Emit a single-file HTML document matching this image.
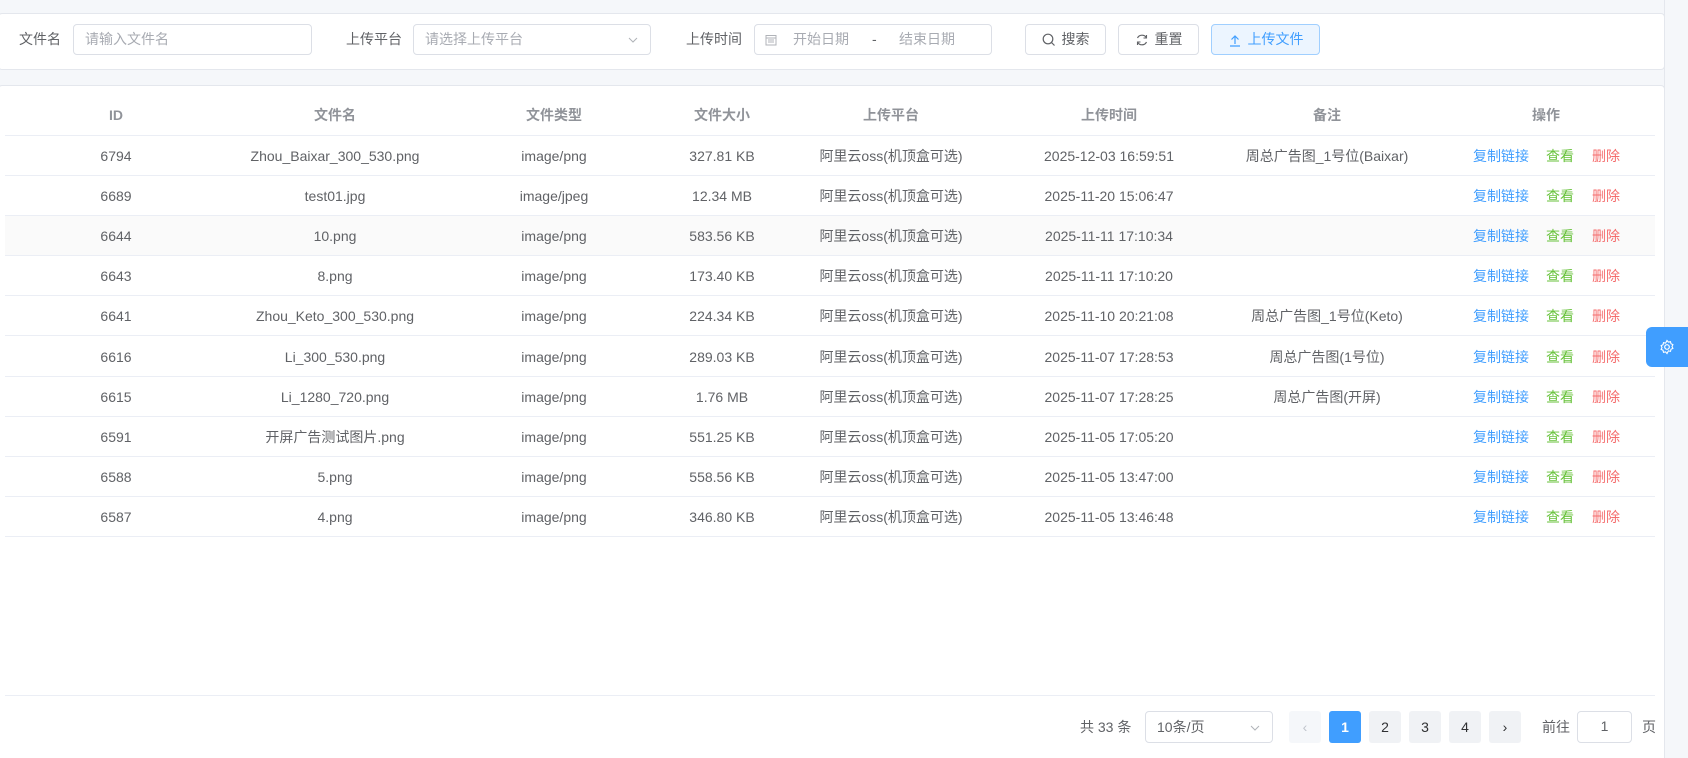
<!DOCTYPE html>
<html><head><meta charset="utf-8"><style>
*{box-sizing:border-box;margin:0;padding:0}
html{width:1688px;height:758px;overflow:hidden}
body{width:1688px;height:758px;background:#f5f7fa;font-family:"Liberation Sans","Noto Sans CJK SC",sans-serif;font-size:14px;color:#606266;position:relative;overflow:hidden}
.abs{position:absolute}
.card{position:absolute;left:-2px;background:#fff;border:1px solid #e4e7ed;border-radius:4px}
.lbl{position:absolute;top:24px;height:31px;line-height:31px;color:#606266;font-size:14px}
.inp{position:absolute;top:24px;height:31px;border:1px solid #dcdfe6;border-radius:4px;color:#a8abb2;line-height:29px;padding-left:11px;font-size:14px}
.btn{position:absolute;top:24px;height:31px;border:1px solid #dcdfe6;border-radius:4px;color:#606266;line-height:29px;font-size:14px;display:flex;align-items:center;justify-content:center;gap:6px}
.row{position:absolute;left:5px;width:1650px;height:40px;border-bottom:1px solid #ebeef5}
.c{position:absolute;top:0;height:40px;line-height:40px;text-align:center;white-space:nowrap;transform:translateX(-50%)}
.h .c{color:#909399;font-weight:bold;line-height:56px;height:48px}
.pg{position:absolute;top:711px;width:32px;height:32px;border-radius:3px;background:#f0f2f5;text-align:center;line-height:32px;color:#303133;font-size:14px}
</style></head><body>
<div class="card" style="top:13px;width:1667px;height:57px"></div>
<div class="lbl" style="left:19px">文件名</div>
<div class="inp" style="left:73px;width:239px">请输入文件名</div>
<div class="lbl" style="left:346px">上传平台</div>
<div class="inp" style="left:413px;width:238px">请选择上传平台<svg class="abs" style="right:12px;top:11px" width="10" height="8" viewBox="0 0 10 8"><path d="M1 2l4 4 4-4" fill="none" stroke="#b0b3b8" stroke-width="1"/></svg></div>
<div class="lbl" style="left:686px">上传时间</div>
<div class="inp" style="left:754px;width:238px;padding-left:0">
<svg class="abs" style="left:10px;top:9px" width="12" height="12" viewBox="0 0 12 12"><rect x="1" y="1.5" width="10" height="9.5" fill="none" stroke="#b0b3b8"/><path d="M1 4h10M3 6h6M3 8h6" stroke="#b0b3b8"/></svg>
<span class="abs" style="left:38px">开始日期</span><span class="abs" style="left:117px;color:#606266">-</span><span class="abs" style="left:144px">结束日期</span></div>
<div class="btn" style="left:1025px;width:81px"><svg width="14" height="14" viewBox="0 0 14 14"><circle cx="6" cy="6" r="4.8" fill="none" stroke="#606266" stroke-width="1.2"/><path d="M9.5 9.5l3 3" stroke="#606266" stroke-width="1.2"/></svg><span>搜索</span></div>
<div class="btn" style="left:1118px;width:81px"><svg width="14" height="14" viewBox="0 0 14 14"><path d="M11.5 5A5 5 0 0 0 2.5 5M2.5 9a5 5 0 0 0 9 0" fill="none" stroke="#606266" stroke-width="1.2"/><path d="M11.5 2v3h-3M2.5 12V9h3" fill="none" stroke="#606266" stroke-width="1.1"/></svg><span>重置</span></div>
<div class="btn" style="left:1211px;width:109px;background:#ecf5ff;border-color:#a0cfff;color:#409eff"><svg width="14" height="14" viewBox="0 0 14 14"><path d="M7 11V3M3.5 6.5L7 3l3.5 3.5M2 13h10" fill="none" stroke="#409eff" stroke-width="1.2"/></svg><span>上传文件</span></div>

<div class="card" style="top:85px;width:1667px;height:673px;border-bottom:none;border-radius:4px 4px 0 0"></div>
<div class="row h" style="top:87px;height:49px">
<div class="c" style="left:111px">ID</div><div class="c" style="left:330px">文件名</div><div class="c" style="left:549px">文件类型</div><div class="c" style="left:717px">文件大小</div><div class="c" style="left:886px">上传平台</div><div class="c" style="left:1104px">上传时间</div><div class="c" style="left:1322px">备注</div><div class="c" style="left:1541px">操作</div></div>
<div id="rows"></div>
<div class="abs" style="left:5px;top:695px;width:1650px;border-top:1px solid #ebeef5"></div>
<div class="abs" style="left:1080px;top:711px;line-height:32px">共 33 条</div>
<div class="inp" style="left:1145px;top:711px;width:128px;height:32px;line-height:30px;color:#606266">10条/页<svg class="abs" style="right:12px;top:12px" width="10" height="8" viewBox="0 0 10 8"><path d="M1 2l4 4 4-4" fill="none" stroke="#b0b3b8"/></svg></div>
<div class="pg" style="left:1289px;color:#c0c4cc;background:#f5f7fa">‹</div>
<div class="pg" style="left:1329px;background:#409eff;color:#fff;font-weight:bold">1</div>
<div class="pg" style="left:1369px">2</div><div class="pg" style="left:1409px">3</div><div class="pg" style="left:1449px">4</div>
<div class="pg" style="left:1489px">›</div>
<div class="abs" style="left:1542px;top:711px;line-height:32px">前往</div>
<div class="inp" style="left:1577px;top:711px;width:55px;height:32px;padding:0;text-align:center;color:#606266">1</div>
<div class="abs" style="left:1642px;top:711px;line-height:32px">页</div>
<div class="abs" style="left:1664px;top:0;width:24px;height:758px;background:#f5f7fa;border-left:1px solid #e4e7ed"></div>
<div class="abs" style="left:1646px;top:327px;width:42px;height:40px;background:#409eff;border-radius:6px 0 0 6px"><svg class="abs" style="left:13px;top:12px" width="16" height="16" viewBox="0 0 16 16"><circle cx="8" cy="8" r="2.3" fill="none" stroke="#fff" stroke-width="1.2"/><path d="M8 1.5l1.4 1.6 2.1-.5.5 2.1 1.9.9-.9 1.9.9 1.9-1.9.9-.5 2.1-2.1-.5L8 14.5l-1.4-1.6-2.1.5-.5-2.1-1.9-.9.9-1.9-.9-1.9 1.9-.9.5-2.1 2.1.5z" fill="none" stroke="#fff" stroke-width="1.1"/></svg></div>
<script>
const d=[["6794","Zhou_Baixar_300_530.png","image/png","327.81 KB","2025-12-03 16:59:51","周总广告图_1号位(Baixar)"],
["6689","test01.jpg","image/jpeg","12.34 MB","2025-11-20 15:06:47",""],
["6644","10.png","image/png","583.56 KB","2025-11-11 17:10:34",""],
["6643","8.png","image/png","173.40 KB","2025-11-11 17:10:20",""],
["6641","Zhou_Keto_300_530.png","image/png","224.34 KB","2025-11-10 20:21:08","周总广告图_1号位(Keto)"],
["6616","Li_300_530.png","image/png","289.03 KB","2025-11-07 17:28:53","周总广告图(1号位)"],
["6615","Li_1280_720.png","image/png","1.76 MB","2025-11-07 17:28:25","周总广告图(开屏)"],
["6591","开屏广告测试图片.png","image/png","551.25 KB","2025-11-05 17:05:20",""],
["6588","5.png","image/png","558.56 KB","2025-11-05 13:47:00",""],
["6587","4.png","image/png","346.80 KB","2025-11-05 13:46:48",""]];
let h="";d.forEach((r,i)=>{h+=`<div class="row" style="top:${136+i*40.1}px;${i==2?'background:#fafafa':''}"><div class="c" style="left:111px">${r[0]}</div><div class="c" style="left:330px">${r[1]}</div><div class="c" style="left:549px">${r[2]}</div><div class="c" style="left:717px">${r[3]}</div><div class="c" style="left:886px">阿里云oss(机顶盒可选)</div><div class="c" style="left:1104px">${r[4]}</div><div class="c" style="left:1322px">${r[5]}</div><div class="c" style="left:1496px;color:#409eff">复制链接</div><div class="c" style="left:1555px;color:#67c23a">查看</div><div class="c" style="left:1601px;color:#f56c6c">删除</div></div>`});
document.getElementById("rows").innerHTML=h;
</script>
</body></html>
